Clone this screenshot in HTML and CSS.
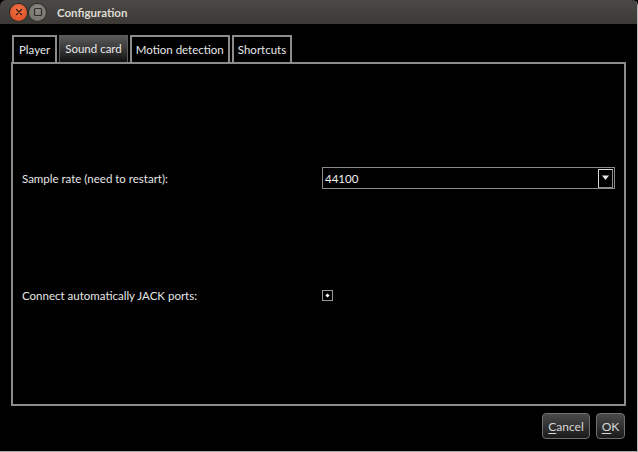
FILE: index.html
```html
<!DOCTYPE html>
<html>
<head>
<meta charset="utf-8">
<link rel="stylesheet" href="styles.css">
</head>
<body>
<div class="window">
  <div class="titlebar">
    <div class="wbtn close"><svg width="16" height="16" viewBox="0 0 16 16"><path d="M5.5 5.5 L10.5 10.5 M10.5 5.5 L5.5 10.5" stroke="#3a1a0a" stroke-width="1.4" stroke-linecap="round"/></svg></div>
    <div class="wbtn max"><svg width="16" height="16" viewBox="0 0 16 16"><rect x="4.5" y="4.5" width="7" height="7" rx="1" fill="none" stroke="#2e2d2a" stroke-width="1.2"/></svg></div>
    <div class="title">Configuration</div>
  </div>
  <div class="content">
    <div class="tabs">
      <div class="tab">Player</div>
      <div class="tab active">Sound card</div>
      <div class="tab">Motion detection</div>
      <div class="tab">Shortcuts</div>
    </div>
    <div class="panel">
      <div class="row row-rate">
        <div class="label">Sample rate (need to restart):</div>
        <div class="combo">
          <span class="combo-text">44100</span>
          <span class="combo-btn"><svg width="9" height="6" viewBox="0 0 9 6"><path d="M1 0.5 L8 0.5 L4.5 5 Z" fill="#e8e8e8"/></svg></span>
        </div>
      </div>
      <div class="row row-jack">
        <div class="label">Connect automatically JACK ports:</div>
        <div class="check"><span class="mark"></span></div>
      </div>
    </div>
    <div class="footer">
      <div class="btn btn-cancel"><u>C</u>ancel</div>
      <div class="btn btn-ok"><u>O</u>K</div>
    </div>
  </div>
</div>
</body>
</html>
```
FILE: styles.css
```css
html, body {
  margin: 0;
  padding: 0;
  background: #000;
}
body {
  width: 638px;
  height: 452px;
  overflow: hidden;
  font-family: Lato, "Open Sans", sans-serif;
  font-size: 11.5px;
  color: #e6e6e6;
}
.window {
  width: 638px;
  height: 452px;
  box-sizing: border-box;
  border-right: 1px solid #b8b8b8;
  border-bottom: 1px solid #a8a8a8;
  border-top-right-radius: 6px;
  display: flex;
  flex-direction: column;
  background: #000;
}
.titlebar {
  height: 24px;
  flex: none;
  display: flex;
  align-items: center;
  padding-left: 10px;
  background: linear-gradient(#4a4945, #3b3a36);
  border-top-right-radius: 6px;
  border-top-left-radius: 6px;
}
.wbtn {
  width: 17px;
  height: 17px;
  border-radius: 50%;
  display: flex;
  align-items: center;
  justify-content: center;
  margin-right: 2px;
}
.wbtn.close {
  background: radial-gradient(circle at 50% 35%, #f4744a, #d8471b);
  box-shadow: 0 0 0 1px #2e2d29;
}
.wbtn.max {
  background: radial-gradient(circle at 50% 35%, #8c8b86, #6c6b66);
  box-shadow: 0 0 0 1px #2e2d29;
}
.title {
  margin-left: 9px;
  font-family: Lato, sans-serif;
  font-weight: bold;
  font-size: 11.5px;
  color: #dfdbd2;
}
.content {
  flex: 1;
  display: flex;
  flex-direction: column;
  padding: 11px 11px 0 11px;
}
.tabs {
  display: flex;
  height: 27px;
  padding-left: 1px;
  gap: 2px;
}
.tab {
  box-sizing: border-box;
  height: 27px;
  border: 2px solid #8c8c8c;
  border-bottom: none;
  padding: 0 4px;
  display: flex;
  align-items: center;
  padding-bottom: 1px;
  color: #e8e8e8;
}
.tab:first-child {
  padding: 0 5px 1px;
}
.tab.active {
  border: 1px solid #5c5c5c;
  border-bottom: none;
  padding: 0 5px 1px;
  background: linear-gradient(#5a5a5a, #2a2a2a 70%, #111);
}
.panel {
  box-sizing: border-box;
  width: 615px;
  height: 344px;
  border: 2px solid #8c8c8c;
  display: flex;
  flex-direction: column;
  padding: 0 0 0 9px;
}
.row {
  display: flex;
  align-items: center;
}
.row-rate {
  margin-top: 103px;
  height: 22px;
}
.row-jack {
  margin-top: 100px;
  height: 12px;
}
.label {
  width: 300px;
  flex: none;
}
.combo {
  box-sizing: border-box;
  width: 293px;
  height: 22px;
  border: 1px solid #8a8a8a;
  display: flex;
  align-items: center;
  justify-content: space-between;
  padding: 0 0 0 2px;
}
.combo-text {
  color: #f0f0f0;
}
.combo-btn {
  box-sizing: border-box;
  width: 15px;
  height: 19px;
  margin-right: 1px;
  border: 1px solid #d8d8d8;
  border-right-color: #909090;
  border-bottom-color: #909090;
  display: flex;
  align-items: center;
  justify-content: center;
  background: #000;
}
.check {
  box-sizing: border-box;
  width: 11px;
  height: 11px;
  border: 1px solid #9a9a9a;
  display: flex;
  align-items: center;
  justify-content: center;
}
.mark {
  width: 3px;
  height: 3px;
  background: #fff;
  transform: rotate(45deg);
}
.footer {
  display: flex;
  justify-content: flex-end;
  gap: 6px;
  margin-top: 7px;
  padding-right: 1px;
}
.btn {
  box-sizing: border-box;
  height: 26px;
  border: 1px solid #707070;
  border-radius: 4px;
  background: linear-gradient(#4a4a4a, #1a1a1a);
  display: flex;
  align-items: center;
  justify-content: center;
  color: #d8d8d8;
  font-size: 12px;
}
.btn-cancel {
  width: 48px;
}
.btn-ok {
  width: 29px;
}
.btn u {
  text-underline-offset: 2px;
}
```
